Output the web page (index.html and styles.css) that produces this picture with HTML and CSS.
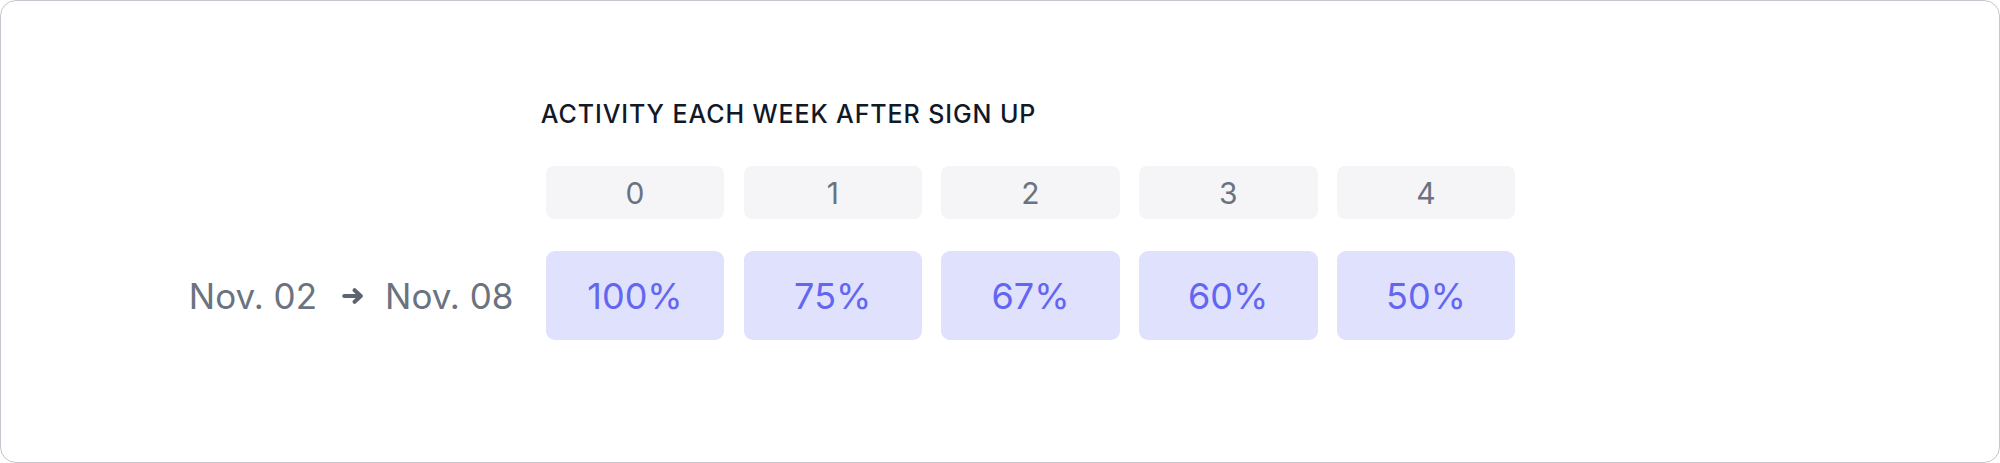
FILE: index.html
```html
<!DOCTYPE html>
<html lang="en">
<head>
<meta charset="utf-8">
<title>Cohort activity</title>
<link rel="stylesheet" href="styles.css">
</head>
<body>
<div class="card">
  <div class="chart">
    <div class="title">ACTIVITY EACH WEEK AFTER SIGN UP</div>
    <div class="spacer"></div>
    <div class="head">0</div>
    <div class="head">1</div>
    <div class="head">2</div>
    <div class="head">3</div>
    <div class="head">4</div>
    <div class="label">
      <span>Nov. 02</span>
      <svg class="arrow" viewBox="0 0 22 16" width="22" height="16" aria-hidden="true">
        <path d="M2.2 8H18.8M12.6 2.2L18.8 8L12.6 13.8" fill="none" stroke="currentColor" stroke-width="4" stroke-linecap="round" stroke-linejoin="round"/>
      </svg>
      <span>Nov. 08</span>
    </div>
    <div class="cell">100%</div>
    <div class="cell">75%</div>
    <div class="cell">67%</div>
    <div class="cell">60%</div>
    <div class="cell">50%</div>
  </div>
</div>
</body>
</html>
```
FILE: styles.css
```css
html, body {
  margin: 0;
  padding: 0;
  background: #ffffff;
}

body {
  font-family: Inter, "Liberation Sans", sans-serif;
}

.card {
  box-sizing: border-box;
  width: 2000px;
  height: 463px;
  border: 1px solid #c4c7ce;
  border-radius: 16px;
  background: #ffffff;
  padding: 101px 0 0 170px;
}

.chart {
  display: grid;
  grid-template-columns: 355.5px repeat(5, 178.5px);
  grid-template-rows: auto 53px 89px;
  column-gap: 19.25px;
  row-gap: 32px;
  align-items: center;
}

.title {
  grid-column: 2 / -1;
  margin-left: -5px;
  margin-bottom: 8px;
  font-size: 25px;
  line-height: 24px;
  font-weight: 500;
  color: #111827;
  letter-spacing: 0.9px;
  white-space: nowrap;
}

.spacer {
  grid-column: 1;
  grid-row: 2;
}

.head {
  height: 53px;
  border-radius: 8px;
  background: #f5f5f7;
  color: #6b7280;
  font-size: 30px;
  display: flex;
  align-items: center;
  justify-content: center;
}

.label {
  justify-self: end;
  padding-right: 13px;
  display: flex;
  align-items: center;
  gap: 21px;
  color: #6b7280;
  font-size: 35px;
  white-space: nowrap;
}

.arrow {
  color: #5e6370;
  margin-left: 4px;
}

.cell {
  height: 89px;
  border-radius: 9px;
  background: #e0e1fc;
  color: #6366f1;
  font-size: 36px;
  display: flex;
  align-items: center;
  justify-content: center;
}
```
